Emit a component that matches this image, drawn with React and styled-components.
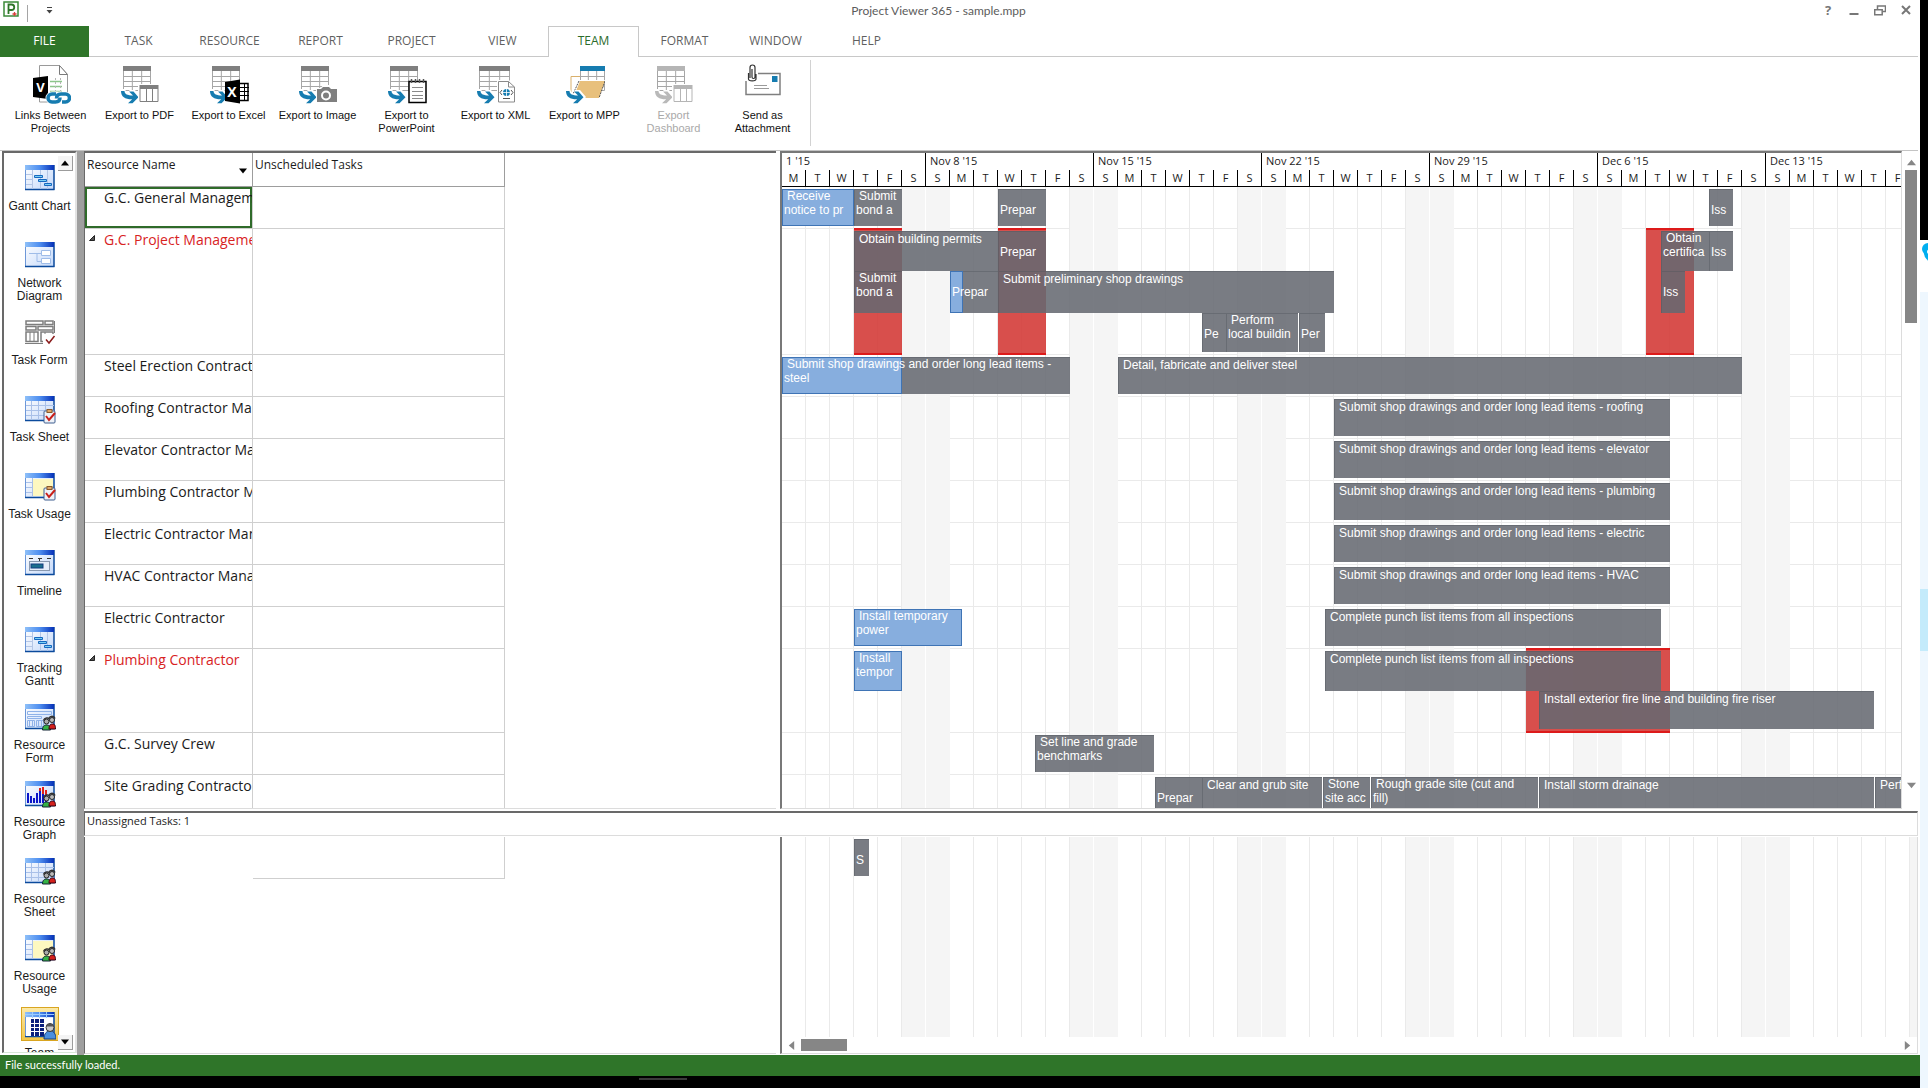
import React from 'react';
import styled, { createGlobalStyle, css } from 'styled-components';

const UI = '"Open Sans", "Noto Sans", sans-serif';
const LABEL = '"Liberation Sans", Arial, sans-serif';
const TITLE = 'Lato, "Open Sans", sans-serif';

const GREEN = '#2f7529';
const DAY = 24;

const GlobalStyle = createGlobalStyle`
    *{
        box-sizing: border-box;
    }

    body{
        margin: 0;
        background: #fff;
        font-family: ${UI};
        color: #1b1b1b;
    }

    button{
        font: inherit;
        color: inherit;
        background: none;
        border: 0;
        padding: 0;
        margin: 0;
    }
`;

/* ---------- data ---------- */

const tabs = ['TASK', 'RESOURCE', 'REPORT', 'PROJECT', 'VIEW', 'TEAM', 'FORMAT', 'WINDOW', 'HELP'];

const commands = [
    { icon: 'links', lines: ['Links Between', 'Projects'] },
    { icon: 'pdf', lines: ['Export to PDF'] },
    { icon: 'excel', lines: ['Export to Excel'] },
    { icon: 'image', lines: ['Export to Image'] },
    { icon: 'powerpoint', lines: ['Export to', 'PowerPoint'] },
    { icon: 'xml', lines: ['Export to XML'] },
    { icon: 'mpp', lines: ['Export to MPP'] },
    { icon: 'dashboard', lines: ['Export', 'Dashboard'], disabled: true },
    { icon: 'mail', lines: ['Send as', 'Attachment'] },
];

const views = [
    { icon: 'gantt', lines: ['Gantt Chart'] },
    { icon: 'network', lines: ['Network', 'Diagram'] },
    { icon: 'taskForm', lines: ['Task Form'] },
    { icon: 'sheet', badge: 'check', lines: ['Task Sheet'] },
    { icon: 'usage', badge: 'check', lines: ['Task Usage'] },
    { icon: 'timeline', lines: ['Timeline'] },
    { icon: 'gantt', lines: ['Tracking', 'Gantt'] },
    { icon: 'form', badge: 'people', lines: ['Resource', 'Form'] },
    { icon: 'graph', badge: 'people', lines: ['Resource', 'Graph'] },
    { icon: 'sheet', badge: 'people', lines: ['Resource', 'Sheet'] },
    { icon: 'usage', badge: 'people', lines: ['Resource', 'Usage'] },
    { icon: 'team', badge: 'person', lines: ['Team'], active: true },
];

const weeks = [
    { label: "1 '15", days: 'MTWTFS' },
    { label: "Nov 8 '15", days: 'SMTWTFS' },
    { label: "Nov 15 '15", days: 'SMTWTFS' },
    { label: "Nov 22 '15", days: 'SMTWTFS' },
    { label: "Nov 29 '15", days: 'SMTWTFS' },
    { label: "Dec 6 '15", days: 'SMTWTFS' },
    { label: "Dec 13 '15", days: 'SMTWTFS' },
];

// from / to / done are hours after Monday, Nov 2; a day is 24px wide, so an hour is one pixel
const longLead = (trade) => [
    { from: 552, to: 888, lines: [`Submit shop drawings and order long lead items - ${trade}`] },
];

const resources = [
    {
        name: 'G.C. General Management',
        height: 42,
        selected: true,
        bars: [
            { from: 0, to: 72, done: 72, lines: ['Receive', 'notice to pr'] },
            { from: 72, to: 120, lines: ['Submit', 'bond a'] },
            { from: 216, to: 264, lines: ['', 'Prepar'] },
            { from: 927, to: 951, lines: ['', 'Iss'] },
        ],
    },
    {
        name: 'G.C. Project Management',
        height: 126,
        over: [[72, 120], [216, 264], [864, 912]],
        bars: [
            { from: 72, to: 216, size: 40, lines: ['Obtain building permits'] },
            { from: 216, to: 264, size: 40, lines: ['', 'Prepar'] },
            { from: 879, to: 927, size: 40, lines: ['Obtain', 'certifica'] },
            { from: 927, to: 951, size: 40, lines: ['', 'Iss'] },
            { from: 72, to: 120, top: 42, size: 42, lines: ['Submit', 'bond a'] },
            { from: 168, to: 216, top: 42, size: 42, done: 13, lines: ['', 'Prepar'] },
            { from: 216, to: 552, top: 42, size: 42, lines: ['Submit preliminary shop drawings'] },
            { from: 879, to: 903, top: 42, size: 42, lines: ['', 'Iss'] },
            { from: 420, to: 444, top: 84, size: 39, lines: ['', 'Pe'] },
            { from: 444, to: 516, top: 84, size: 39, lines: ['Perform', 'local buildin'] },
            { from: 517, to: 543, top: 84, size: 39, lines: ['', 'Per'] },
        ],
    },
    {
        name: 'Steel Erection Contractor',
        height: 42,
        bars: [
            { from: 0, to: 288, done: 120, lines: ['Submit shop drawings and order long lead items -', 'steel'] },
            { from: 336, to: 960, lines: ['Detail, fabricate and deliver steel'] },
        ],
    },
    { name: 'Roofing Contractor Management', height: 42, bars: longLead('roofing') },
    { name: 'Elevator Contractor Management', height: 42, bars: longLead('elevator') },
    { name: 'Plumbing Contractor Management', height: 42, bars: longLead('plumbing') },
    { name: 'Electric Contractor Management', height: 42, bars: longLead('electric') },
    { name: 'HVAC Contractor Management', height: 42, bars: longLead('HVAC') },
    {
        name: 'Electric Contractor',
        height: 42,
        bars: [
            { from: 72, to: 180, done: 108, lines: ['Install temporary', 'power'] },
            { from: 543, to: 879, lines: ['Complete punch list items from all inspections'] },
        ],
    },
    {
        name: 'Plumbing Contractor',
        height: 84,
        over: [[744, 888]],
        bars: [
            { from: 72, to: 120, size: 40, done: 48, lines: ['Install', 'tempor'] },
            { from: 543, to: 879, size: 40, lines: ['Complete punch list items from all inspections'] },
            { from: 757, to: 1092, top: 42, size: 38, lines: ['Install exterior fire line and building fire riser'] },
        ],
    },
    {
        name: 'G.C. Survey Crew',
        height: 42,
        bars: [{ from: 253, to: 372, lines: ['Set line and grade', 'benchmarks'] }],
    },
    {
        name: 'Site Grading Contractor',
        height: 42,
        bars: [
            { from: 373, to: 420, lines: ['', 'Prepar'] },
            { from: 420, to: 540, lines: ['Clear and grub site'] },
            { from: 541, to: 588, lines: ['Stone', 'site acc'] },
            { from: 589, to: 756, lines: ['Rough grade site (cut and', 'fill)'] },
            { from: 757, to: 1092, lines: ['Install storm drainage'] },
            { from: 1093, to: 1140, lines: ['Perform'] },
        ],
    },
];

const unassigned = [{ from: 72, to: 87, lines: ['', 'S'] }];

/* ---------- ribbon icons ---------- */

const SheetShape = ({ x = 3, w = 28, head = '#7f7f7f' }) => (
    <g>
        <rect x={x} y="3" width={w} height="25" fill="#fff" />
        <path
            d={`M${x + 0.5} 8V27.5H${x + w - 0.5}V8M${x} 13.5h${w}M${x} 18.5h${w}M${x} 23.5h${w}M${x + w / 3} 8v20M${x + (w * 2) / 3} 8v20`}
            fill="none"
            stroke="#a6a6a6"
        />
        <rect x={x} y="3" width={w} height="5" fill={head} />
    </g>
);

const ArrowShape = ({ color = '#167cb0' }) => (
    <g>
        <path d="M0 26h5c1 4 4 5 7 5l-3-4h6l6 7-6 7H9c-5-1-9-5-9-12z" fill="#fff" />
        <path d="M1 28h3.500c0 3 3 4.500 8.500 4.500L9 28.500h4.500l5 5.800-6 6H8l4.200-4C5.500 36.500 1 34 1 28z" fill={color} />
    </g>
);

const SmallTable = ({ color = '#7f7f7f' }) => (
    <g>
        <rect x="18" y="21" width="22" height="19" fill="#fff" />
        <path d="M20 26v12.500h18V26M26.500 26v12M32.500 26v12" fill="none" stroke={color} />
        <rect x="19.500" y="22" width="19" height="4" fill={color} />
    </g>
);

const CommandIcon = ({ name }) => (
    <svg width="40" height="42" viewBox="0 0 40 42" aria-hidden="true">
        {name === 'links' && (
            <g>
                <path d="M8.500 2.500h20l8 9V39h-28z" fill="#fff" stroke="#9a9a9a" />
                <path d="M28.500 2.500v9h8z" fill="#fff" stroke="#7a7a7a" />
                <path d="M19 18.500h12M19 23.500h12M19 28.500h12" stroke="#8cc68a" strokeWidth="1.500" />
                <path d="M24.500 15v15M29.500 15v15" stroke="#b5b5b5" strokeDasharray="2 2" />
                <path d="M2 15l15-2v23L2 34z" fill="#000" />
                <text x="9.500" y="29" textAnchor="middle" fontFamily="Open Sans" fontSize="13" fontWeight="700" fill="#fff">V</text>
                <g fill="none" stroke="#fff" strokeWidth="7">
                    <rect x="18" y="32" width="11" height="6" rx="3" />
                    <rect x="26" y="32" width="11" height="6" rx="3" />
                </g>
                <g fill="none" stroke="#167cb0" strokeWidth="3.500">
                    <path d="M25 31h-4a4 4 0 0 0 0 8h3.500c3 0 4.500-2 4.500-4.500" />
                    <path d="M31 39h3.500a4 4 0 0 0 0-8H30c-3 0-4.500 2-4.500 4.500" />
                </g>
            </g>
        )}
        {['pdf', 'excel', 'image', 'powerpoint'].includes(name) && <SheetShape />}
        {name === 'xml' && <SheetShape w={31} />}
        {name === 'mpp' && (
            <g>
                <path d="M6 30V13.500h9" fill="none" stroke="#d9b06c" />
                <SheetShape x={15} w={25} head="#167cb0" />
                <path d="M14 17h26l-6 19H17L9 28z" fill="#fff" />
                <path d="M15 18h25l-6 17H18l-7-7z" fill="#e8c07c" />
                <path d="M14 18l-6 13M40 18l-6 17" stroke="#555" strokeDasharray="2 1" />
            </g>
        )}
        {!['links', 'dashboard', 'mail'].includes(name) && <ArrowShape />}
        {name === 'pdf' && <SmallTable />}
        {name === 'excel' && (
            <g>
                <rect x="28" y="20" width="12" height="18" fill="#fff" />
                <rect x="29" y="20.500" width="10" height="17" fill="#fff" stroke="#000" strokeWidth="1.500" />
                <path d="M29 24.500h11M29 28.500h11M29 32.500h11M35.500 20v18" stroke="#000" />
                <path d="M16 19l15-2.500v24L16 38z" fill="#000" />
                <text x="23" y="34" textAnchor="middle" fontFamily="Open Sans" fontSize="14" fontWeight="700" fill="#fff">X</text>
            </g>
        )}
        {name === 'image' && (
            <g>
                <path d="M18 25h5l2-3h7l2 3h6v15H18z" fill="#fff" />
                <path d="M19 26h4l2-2h6l2 2h6v13H19z" fill="#7f7f7f" />
                <circle cx="28" cy="32.500" r="4" fill="none" stroke="#fff" strokeWidth="2" />
            </g>
        )}
        {name === 'powerpoint' && (
            <g>
                <path d="M22 18.500h17v21H22z" fill="#fff" stroke="#000" strokeWidth="1.500" />
                <path d="M24.500 16v4M28.500 16v4M32.500 16v4M36.500 16v4" stroke="#555" strokeWidth="1.500" />
                <path d="M25 24.500h11M25 28.500h11M25 32.500h11M25 35.500h11" stroke="#8a8a8a" />
            </g>
        )}
        {name === 'xml' && (
            <g>
                <path d="M21 17h12l6 6v18H21z" fill="#fff" />
                <path d="M22.500 18.500h10l6 5.500v15h-16zM32.500 18.500V24h6" fill="#fff" stroke="#8a8a8a" />
                <circle cx="30.500" cy="29.500" r="3.500" fill="#167cb0" />
                <path d="M27 29.500h7M30.500 26v7" stroke="#fff" strokeWidth="0.800" />
                <path d="M26 27l-2 2.500 2 2.500M35 27l2 2.500-2 2.500M27 35.500h7" fill="none" stroke="#555" />
            </g>
        )}
        {name === 'dashboard' && (
            <g>
                <SheetShape head="#b5b5b5" />
                <ArrowShape color="#b9b9b9" />
                <SmallTable color="#b5b5b5" />
            </g>
        )}
        {name === 'mail' && (
            <g>
                <rect x="3" y="10.500" width="34" height="21" fill="#fff" stroke="#7f7f7f" strokeWidth="1.500" />
                <rect x="29" y="13" width="5.500" height="6" fill="#167cb0" />
                <path d="M11 22.500h13M11 25.500h15" stroke="#9a9a9a" />
                <path d="M2 8h13v10H2z" fill="#fff" />
                <path d="M7 15V4.500a2.500 2.500 0 0 1 5 0V14a1.500 1.500 0 0 1-3 0V6M5.500 10v6c0 2.500 7.500 2.500 7.500 0v-5" fill="none" stroke="#333" strokeWidth="1.200" />
            </g>
        )}
    </svg>
);

/* ---------- view bar icons ---------- */

const Badge = ({ type }) => {
    if (type === 'check') {
        return (
            <g>
                <rect x="20" y="15" width="11" height="12" rx="1" fill="#eef2f8" stroke="#3f5f90" />
                <rect x="23" y="13.500" width="5" height="3" fill="#e0a868" stroke="#8a5a2a" />
                <path d="M22 20l3 4 6-7" fill="none" stroke="#c8201a" strokeWidth="2" />
            </g>
        );
    }
    if (type === 'people') {
        return (
            <g>
                <path d="M18.500 26c0-4 2-5 4-5s4 1 4 5z" fill="#35b345" stroke="#123" />
                <path d="M25 25c0-4 1.500-5 3.500-5s3 1 3 5z" fill="#d4201c" stroke="#301" />
                <circle cx="22.500" cy="17.500" r="2.500" fill="#aaa" stroke="#222" />
                <circle cx="28" cy="16" r="2.500" fill="#bbb" stroke="#222" />
                <path d="M19.500 16.500c1-3 5-3 6-1.500M25 14.500c1-3 5-3 6 0" fill="none" stroke="#333" strokeWidth="1.500" />
            </g>
        );
    }
    if (type === 'person') {
        return (
            <g>
                <path d="M20 27c0-6 3-8 6-8s6 2 6 8z" fill="#4a8fe0" stroke="#173f7d" />
                <circle cx="26" cy="15.500" r="4" fill="#c9c9c9" stroke="#333" />
                <path d="M22 14.500c1-4 7-4 8 0z" fill="#555" />
            </g>
        );
    }
    return null;
};

const ViewIcon = ({ name, badge }) => {
    if (name === 'taskForm') {
        return (
            <svg width="32" height="28" viewBox="0 0 32 28" aria-hidden="true">
                <g fill="#fff" stroke="#7d7d7d">
                    <path d="M2 2h17v3.500H2zM21 2h8v3.500h-8zM2 7.500h10v3.500H2zM14 7.500h15v3.500H14zM2 13h12v9.500H2zM17 13h12v9.500H17z" strokeWidth="1.500" />
                    <path d="M6 13v9M10 13v9M21 13v9M30.500 2v12M1 24.500h19" />
                </g>
                <path d="M19 15h12v10H19z" fill="#fff" />
                <path d="M22 20.500l3 3.500 5.500-7" fill="none" stroke="#8a1c1c" strokeWidth="1.500" />
            </svg>
        );
    }
    return (
        <svg width="32" height="28" viewBox="0 0 32 28" aria-hidden="true">
            <defs>
                <linearGradient id="caption" x1="0" x2="1" y1="0" y2="0">
                    <stop offset="0" stopColor="#8fc0f8" />
                    <stop offset="0.500" stopColor="#4f8ff0" />
                    <stop offset="1" stopColor="#0631b8" />
                </linearGradient>
                <linearGradient id="body" x1="0" x2="1" y1="0" y2="1">
                    <stop offset="0" stopColor="#ffffff" />
                    <stop offset="1" stopColor="#c3d8fa" />
                </linearGradient>
            </defs>
            <rect x="1" y="0" width="29" height="25" fill="url(#body)" />
            <path d="M1.500 0v24.500" stroke="#6d97d8" />
            <path d="M1 24.500h29.500M30 0v25" fill="none" stroke="#0b4a9c" strokeWidth="1.500" />
            <rect x="1" y="0" width="29" height="5" fill="url(#caption)" />
            {name === 'gantt' && (
                <g>
                    <path d="M8.500 5v19M2 9.500h6M2 14.500h6M2 19.500h6M16.500 5v19M23.500 5v19" stroke="#b4c6e6" />
                    <path d="M10.500 10.500h8v2h-8zM14.500 14.500h8v2h-8zM20.500 18.500h7v2h-7z" fill="#7cd0f4" stroke="#1668c0" />
                </g>
            )}
            {name === 'network' && (
                <g fill="#fff" stroke="#9fbce8">
                    <path d="M5 11.500h12M13 11.500v8h8" fill="none" />
                    <path d="M17.500 8.500h9v5h-9zM17.500 16.500h9v5h-9z" />
                </g>
            )}
            {name === 'sheet' && (
                <path d="M7.500 5v19M14.500 5v19M21.500 5v19M2 9.500h28M2 14.500h28M2 19.500h28" stroke="#a9c0e8" />
            )}
            {name === 'usage' && (
                <g>
                    <rect x="8" y="6" width="21" height="17" fill="#fdf8c0" />
                    <path d="M8.500 5v19M2 9.500h6M2 14.500h6M2 19.500h6" stroke="#a9c0e8" />
                </g>
            )}
            {name === 'timeline' && (
                <g>
                    <path d="M5 8.500h4M14 8.500h4M23 8.500h4M15.500 9v3" stroke="#333" />
                    <rect x="5.500" y="11.500" width="20" height="9" fill="#e6eefb" stroke="#8898b0" />
                    <rect x="7" y="14" width="12" height="4" fill="#1b6e8c" stroke="#123c80" />
                </g>
            )}
            {name === 'form' && (
                <g fill="none" stroke="#8fb2e8">
                    <path d="M3.500 7.500h24v3h-24zM3.500 12.500h14v2h-14zM3.500 16.500h7v6h-7zM12.500 16.500h7v6h-7z" />
                    <path d="M5.500 17v5M8.500 17v5M14.500 17v5M17.500 17v5" />
                </g>
            )}
            {name === 'graph' && (
                <g>
                    <path d="M4 22V12M7 22v-7M10 22v-5M13 22V12M16 22V9" stroke="#0a14c8" strokeWidth="2" />
                    <path d="M16 10V7M19 22V6M22 22V9" stroke="#e02018" strokeWidth="2" />
                    <path d="M19 22v-9M22 22v-8" stroke="#0a14c8" strokeWidth="2" />
                </g>
            )}
            {name === 'team' && (
                <g>
                    <rect x="2" y="6" width="27" height="18" fill="#fff" />
                    <path d="M1 2.500h29M8.500 0v6M15.500 0v6M22.500 0v6" stroke="#9cccff" />
                    <path d="M7 7h13v17H7z" fill="#0b1f7c" />
                    <path d="M7 11.500h13M7 15.500h13M7 19.500h13M10.500 7v17M15.500 7v17" stroke="#fff" />
                </g>
            )}
            <Badge type={badge} />
        </svg>
    );
};

const Triangle = ({ dir, size = 9, color = '#868686' }) => {
    const d = {
        up: 'M0 8L5 2l5 6z',
        down: 'M0 2l5 6 5-6z',
        left: 'M8 0L2 5l6 5z',
        right: 'M2 0l6 5-6 5z',
    }[dir];
    return (
        <svg width={size} height={size} viewBox="0 0 10 10" aria-hidden="true">
            <path d={d} fill={color} />
        </svg>
    );
};

/* ---------- styled parts ---------- */

const Desktop = styled.div`
    height: 100vh;
    display: flex;
    overflow: hidden;
    background: #fff;
`;

const AppWindow = styled.div`
    flex: 1;
    min-width: 0;
    display: flex;
    flex-direction: column;
`;

const Behind = styled.div`
    width: 8px;
    flex: none;
    display: flex;
    flex-direction: column;
    overflow: hidden;

    .screen{
        flex: 0 0 240px;
        background: #000;
    }

    .logo{
        flex: 0 0 52px;
        padding: 3px 0 0 2px;
    }

    .chat{
        flex: 0 0 297px;
        background: #eef7fe;
    }

    .picked{
        flex: 0 0 62px;
        background: #c4ebfb;
    }

    .rest{
        flex: 1;
        background: #eef7fe;
    }
`;

const TitleBar = styled.header`
    height: 26px;
    flex: none;
    display: grid;
    grid-template-columns: 1fr auto 1fr;
    align-items: start;
    padding: 0 6px 0 3px;

    h1{
        margin: 0;
        padding-right: 40px;
        font: 400 12px/22px ${TITLE};
        color: #5c5c5c;
    }
`;

const QuickAccess = styled.div`
    display: flex;
    align-items: flex-start;

    .divider{
        width: 1px;
        height: 17px;
        margin: 5px 18px 0 8px;
        background: #a5a5a5;
    }

    button{
        height: 20px;
        display: flex;
        align-items: center;
    }
`;

const WindowButtons = styled.div`
    display: flex;
    justify-content: flex-end;
    gap: 10px;

    button{
        width: 16px;
        height: 20px;
        display: flex;
        align-items: center;
        justify-content: center;
        font: 700 13px/20px ${UI};
        color: #777;
    }
`;

const TabBar = styled.nav`
    height: 31px;
    flex: none;
    display: flex;
    margin-right: 2px;
    box-shadow: inset 0 -1px #c8c8c8;
`;

const Tab = styled.button`
    width: 91px;
    padding-bottom: 3px;
    border: 1px solid transparent;
    border-bottom: 0;
    font-size: 12px;
    line-height: 26px;
    color: #5f5f5f;

    ${(p) => p.$active && css`
        background: #fff;
        border-color: #c8c8c8;
        color: #2b6b2b;
    `}
`;

const FileTab = styled(Tab)`
    width: 89px;
    margin-right: 4px;
    padding-bottom: 2px;
    background: ${GREEN};
    color: #fff;
`;

const Ribbon = styled.div`
    height: 94px;
    flex: none;
    display: flex;
    margin-right: 2px;
    padding-left: 6px;
    border-bottom: 1px solid #c4c4c4;

    .divider{
        width: 1px;
        margin: 3px 0 4px 3px;
        background: #d2d2d2;
    }
`;

const Command = styled.button`
    width: 89px;
    padding-top: 6px;
    display: flex;
    flex-direction: column;
    align-items: center;
    font: 11px/13px ${LABEL};
    color: ${(p) => (p.disabled ? '#a9a9a9' : '#111')};

    svg{
        margin-bottom: 4px;
    }

    span{
        white-space: nowrap;
    }
`;

const Workspace = styled.div`
    flex: 1;
    min-height: 0;
    display: flex;
`;

const ViewBar = styled.nav`
    position: relative;
    width: 75px;
    flex: none;
    margin: 0 0 2px 2px;
    padding-top: 7px;
    overflow: hidden;
    border: solid #696969;
    border-width: 2px 0 0 2px;
    border-bottom: 1px solid #d8e8d8;
    border-right: 2px solid #e3e3e3;
`;

const View = styled.button`
    width: 100%;
    height: 77px;
    display: flex;
    flex-direction: column;
    align-items: center;
    font: 12px/13px ${LABEL};

    .icon{
        width: 38px;
        height: 34px;
        margin-bottom: 6px;
        padding-top: 4px;
        border: 1px solid ${(p) => (p.$active ? '#d9a520' : 'transparent')};
        background: ${(p) => (p.$active ? 'linear-gradient(#fbe9a8, #f3c648)' : 'none')};
    }
`;

const ViewScroll = styled.button`
    position: absolute;
    right: 2px;
    ${(p) => (p.$end ? 'bottom: 2px;' : 'top: 3px;')}
    width: 15px;
    height: 15px;
    display: flex;
    align-items: center;
    justify-content: center;
    background: #f4f4f4;
    border: solid #9c9c9c;
    border-width: 0 1px 1px 0;
`;

const SideSplitter = styled.div`
    width: 7px;
    flex: none;
    background: #9f9f9f;
`;

const Main = styled.main`
    flex: 1;
    min-width: 0;
    display: flex;
    flex-direction: column;
    gap: 2px;
`;

const Upper = styled.section`
    flex: 1;
    min-height: 0;
    display: flex;
`;

const Sheet = styled.div`
    width: 692px;
    flex: none;
    margin-right: 4px;
    overflow: hidden;
    border: solid #696969;
    border-width: ${(p) => (p.$lower ? '0 0 0 1px' : '2px 0 0 1px')};
    border-bottom: 1px solid #dcdcdc;
`;

const ResourceTable = styled.table`
    width: 420px;
    table-layout: fixed;
    border-collapse: separate;
    border-spacing: 0;

    col.name{
        width: 168px;
    }

    th, td{
        padding: 0;
        vertical-align: top;
        text-align: left;
        font-weight: 400;
        white-space: nowrap;
        overflow: hidden;
        border-right: 1px solid #cfcfcf;
        border-bottom: 1px solid #cfcfcf;
    }

    thead th{
        height: 34px;
        padding: 0 2px;
        font-size: 12px;
        line-height: 24px;
        border-color: #9d9d9d;
    }

    thead .head{
        display: flex;
        justify-content: space-between;
    }

    thead button{
        padding: 6px 3px 0 0;
    }

    td.blank{
        border-color: transparent;
    }
`;

const NameCell = styled.th`
    font-size: 14px;
    line-height: 21px;
    color: ${(p) => (p.$over ? '#d8231f' : '#1b1b1b')};
    ${(p) => p.$selected && 'box-shadow: inset 0 0 0 2px #2f6b2a;'}

    .name{
        display: grid;
        grid-template-columns: 15px 1fr;
        padding-left: 4px;
    }

    button{
        align-self: start;
        display: flex;
        padding-top: 6px;
    }
`;

const Chart = styled.div`
    flex: 1;
    min-width: 0;
    display: flex;
    flex-direction: column;
    overflow: hidden;
    border: solid #787878;
    border-width: ${(p) => (p.$lower ? '0 0 0 2px' : '2px 0 0 2px')};
    border-right: 1px solid #dcdcdc;
    border-bottom: 1px solid #dcdcdc;
`;

const Calendar = styled.div`
    flex: none;
    display: flex;
    border-bottom: 1px solid #000;
`;

const Week = styled.div`
    flex: none;
    height: 33px;
    border-right: 1px solid #000;
    font-size: 11px;

    .label{
        padding: 0 0 2px 4px;
        line-height: 15px;
    }

    .days{
        display: flex;
    }
`;

const Day = styled.span`
    width: ${DAY}px;
    line-height: 16px;
    text-align: center;
    border-right: 1px solid #000;

    &:last-child{
        width: ${DAY - 1}px;
        border-right: 0;
    }
`;

const Row = styled.div`
    position: relative;
    flex: none;
    height: ${(p) => p.$height}px;
    background:
        repeating-linear-gradient(90deg, transparent 0 120px, #f5f5f5 120px 143px, #fff 143px 144px, #f5f5f5 144px 168px),
        linear-gradient(#eaeaea, #eaeaea) left bottom / 100% 1px no-repeat,
        repeating-linear-gradient(90deg, transparent 0 ${DAY - 1}px, #eaeaea ${DAY - 1}px ${DAY}px);
`;

const FreeRow = styled(Row)`
    flex: 1;
    height: auto;
    background:
        repeating-linear-gradient(90deg, transparent 0 120px, #f5f5f5 120px 143px, #fff 143px 144px, #f5f5f5 144px 168px),
        repeating-linear-gradient(90deg, transparent 0 ${DAY - 1}px, #eaeaea ${DAY - 1}px ${DAY}px);
`;

const Overload = styled.div`
    position: absolute;
    top: -1px;
    bottom: 0;
    background: rgba(212, 60, 57, 0.9);
    border: solid #dd1a1a;
    border-width: 2px 0;
`;

const TaskBar = styled.div`
    position: absolute;
    top: ${(p) => p.$top}px;
    height: ${(p) => p.$size}px;
    overflow: hidden;
    background: rgba(101, 105, 112, 0.87);
    box-shadow: inset 1px 1px rgba(80, 84, 92, 0.4);
    font: 12px/14px ${LABEL};
    color: #fff;
    white-space: nowrap;

    .done{
        position: absolute;
        top: 0;
        bottom: 0;
        left: 0;
        background: #87aede;
        border: 1px solid #3f74b5;
    }

    .text{
        position: relative;
        padding-left: 2px;
    }

    .text div{
        height: 14px;
    }

    .text div:first-child{
        padding-left: 3px;
    }

    .text div:only-child{
        padding-top: 1px;
    }
`;

const VerticalScroll = styled.div`
    width: 18px;
    flex: none;
    display: flex;
    flex-direction: column;
    align-items: center;
    padding: 3px 0 16px;

    button{
        height: 16px;
        display: flex;
        align-items: center;
    }

    .thumb{
        width: 12px;
        height: 153px;
        margin-bottom: auto;
        background: #868686;
    }
`;

const HorizontalScroll = styled.div`
    height: 16px;
    flex: none;
    display: flex;
    align-items: center;
    padding: 0 5px;

    button{
        display: flex;
    }

    .thumb{
        width: 46px;
        height: 12px;
        margin: 2px auto 2px 5px;
        background: #868686;
    }
`;

const Lower = styled.section`
    flex: 0 0 243px;
    display: flex;
    flex-direction: column;
    gap: 1px;
    margin: 0 2px 1px 0;
`;

const UnassignedHeader = styled.h2`
    height: 25px;
    flex: none;
    margin: 0;
    padding-left: 2px;
    border: solid #696969;
    border-width: 2px 0 0 1px;
    border-right: 1px solid #dcdcdc;
    border-bottom: 1px solid #dcdcdc;
    font-size: 11px;
    font-weight: 400;
    line-height: 15px;
`;

const LowerBody = styled.div`
    flex: 1;
    min-height: 0;
    display: flex;
`;

const StatusBar = styled.footer`
    height: 21px;
    flex: none;
    padding-left: 5px;
    background: ${GREEN};
    color: #fff;
    font: 11px/20px ${TITLE};
`;

const Dock = styled.div`
    height: 12px;
    flex: none;
    padding: 2px 0 0 33.3%;
    background: #000;

    .mark{
        width: 48px;
        height: 2px;
        background: #3a3a3a;
    }
`;

/* ---------- components ---------- */

const Bars = ({ items }) => items.map((bar) => (
    <TaskBar
        key={`${bar.from}-${bar.top || 0}`}
        $top={bar.top || 2}
        $size={bar.size || 37}
        style={{ left: bar.from, width: bar.to - bar.from }}
    >
        {bar.done && <div className="done" style={{ width: bar.done }} />}
        <div className="text">
            {bar.lines.map((line, i) => <div key={i}>{line}</div>)}
        </div>
    </TaskBar>
));

const Header = () => (
    <>
        <TitleBar>
            <QuickAccess>
                <svg width="16" height="17" viewBox="0 0 16 17" aria-hidden="true">
                    <path d="M1 2h14v14H1z" fill="#fff" stroke="#3d8a3a" strokeWidth="1.500" />
                    <path d="M5.500 14V4.500h3a2.700 2.700 0 0 1 0 5.500h-3" fill="none" stroke="#2f7529" strokeWidth="1.800" />
                    <path d="M11.500 12v4M9.500 14h4" stroke="#d8403a" strokeWidth="1.300" />
                </svg>
                <span className="divider" />
                <button aria-label="Customize toolbar">
                    <svg width="7" height="8" viewBox="0 0 7 8" aria-hidden="true">
                        <path d="M1 1.500h5" stroke="#444" />
                        <path d="M0.500 4h6l-3 3.500z" fill="#444" />
                    </svg>
                </button>
            </QuickAccess>
            <h1>Project Viewer 365 - sample.mpp</h1>
            <WindowButtons>
                <button>?</button>
                <button aria-label="Minimize">
                    <svg width="10" height="12" viewBox="0 0 10 12"><path d="M0.500 10h9" stroke="#777" strokeWidth="2" /></svg>
                </button>
                <button aria-label="Restore">
                    <svg width="12" height="11" viewBox="0 0 12 11" fill="none" stroke="#777">
                        <path d="M3.500 4V1h8v5.500h-3" strokeWidth="1.500" />
                        <path d="M0.700 4.700h7.500v5H0.700z" strokeWidth="1.500" />
                    </svg>
                </button>
                <button aria-label="Close">
                    <svg width="10" height="10" viewBox="0 0 10 10"><path d="M1 1l8 8M9 1L1 9" stroke="#777" strokeWidth="2" /></svg>
                </button>
            </WindowButtons>
        </TitleBar>
        <TabBar>
            <FileTab>FILE</FileTab>
            {tabs.map((name) => <Tab key={name} $active={name === 'TEAM'}>{name}</Tab>)}
        </TabBar>
        <Ribbon>
            {commands.map((c) => (
                <Command key={c.icon} disabled={c.disabled}>
                    <CommandIcon name={c.icon} />
                    {c.lines.map((line) => <span key={line}>{line}</span>)}
                </Command>
            ))}
            <span className="divider" />
        </Ribbon>
    </>
);

const Sidebar = () => (
    <ViewBar>
        {views.map((v) => (
            <View key={v.lines.join(' ')} $active={v.active}>
                <span className="icon"><ViewIcon name={v.icon} badge={v.badge} /></span>
                {v.lines.map((line) => <span key={line}>{line}</span>)}
            </View>
        ))}
        <ViewScroll aria-label="Scroll up"><Triangle dir="up" size={8} color="#000" /></ViewScroll>
        <ViewScroll $end aria-label="Scroll down"><Triangle dir="down" size={8} color="#000" /></ViewScroll>
    </ViewBar>
);

const ResourceSheet = () => (
    <Sheet>
        <ResourceTable>
            <colgroup>
                <col className="name" />
                <col />
            </colgroup>
            <thead>
                <tr>
                    <th>
                        <div className="head">
                            Resource Name
                            <button aria-label="Filter"><Triangle dir="down" size={8} color="#000" /></button>
                        </div>
                    </th>
                    <th>Unscheduled Tasks</th>
                </tr>
            </thead>
            <tbody>
                {resources.map((r) => (
                    <tr key={r.name} style={{ height: r.height }}>
                        <NameCell scope="row" $over={!!r.over} $selected={r.selected}>
                            <div className="name">
                                {r.over ? (
                                    <button aria-label="Collapse">
                                        <svg width="6" height="6" viewBox="0 0 6 6"><path d="M5.500 0.500v5h-5z" fill="#555" stroke="#222" /></svg>
                                    </button>
                                ) : <span />}
                                <span>{r.name}</span>
                            </div>
                        </NameCell>
                        <td />
                    </tr>
                ))}
            </tbody>
        </ResourceTable>
    </Sheet>
);

const Timeline = () => (
    <Chart>
        <Calendar>
            {weeks.map((w) => (
                <Week key={w.label}>
                    <div className="label">{w.label}</div>
                    <div className="days">
                        {w.days.split('').map((d, i) => <Day key={i}>{d}</Day>)}
                    </div>
                </Week>
            ))}
        </Calendar>
        {resources.map((r) => (
            <Row key={r.name} $height={r.height}>
                {(r.over || []).map(([from, to]) => (
                    <Overload key={from} style={{ left: from, width: to - from }} />
                ))}
                <Bars items={r.bars} />
            </Row>
        ))}
    </Chart>
);

const App = () => (
    <Desktop>
        <GlobalStyle />
        <AppWindow>
            <Header />
            <Workspace>
                <Sidebar />
                <SideSplitter />
                <Main>
                    <Upper>
                        <ResourceSheet />
                        <Timeline />
                        <VerticalScroll>
                            <button aria-label="Scroll up"><Triangle dir="up" /></button>
                            <div className="thumb" />
                            <button aria-label="Scroll down"><Triangle dir="down" /></button>
                        </VerticalScroll>
                    </Upper>
                    <Lower>
                        <UnassignedHeader>Unassigned Tasks: 1</UnassignedHeader>
                        <LowerBody>
                            <Sheet $lower>
                                <ResourceTable>
                                    <colgroup>
                                        <col className="name" />
                                        <col />
                                    </colgroup>
                                    <tbody>
                                        <tr style={{ height: 42 }}>
                                            <td className="blank" />
                                            <td />
                                        </tr>
                                    </tbody>
                                </ResourceTable>
                            </Sheet>
                            <Chart $lower>
                                <FreeRow>
                                    <Bars items={unassigned} />
                                </FreeRow>
                                <HorizontalScroll>
                                    <button aria-label="Scroll left"><Triangle dir="left" /></button>
                                    <div className="thumb" />
                                    <button aria-label="Scroll right"><Triangle dir="right" /></button>
                                </HorizontalScroll>
                            </Chart>
                        </LowerBody>
                    </Lower>
                </Main>
            </Workspace>
            <StatusBar>File successfully loaded.</StatusBar>
            <Dock><div className="mark" /></Dock>
        </AppWindow>
        <Behind>
            <div className="screen" />
            <div className="logo">
                <svg width="20" height="20" viewBox="0 0 20 20" aria-hidden="true">
                    <circle cx="6" cy="6" r="6" fill="#00aff0" />
                    <circle cx="11" cy="10" r="9" fill="#00aff0" />
                    <path d="M8 7c-3 0-3 3 0 4" fill="none" stroke="#fff" strokeWidth="1.500" />
                </svg>
            </div>
            <div className="chat" />
            <div className="picked" />
            <div className="rest" />
        </Behind>
    </Desktop>
);

export default App;
